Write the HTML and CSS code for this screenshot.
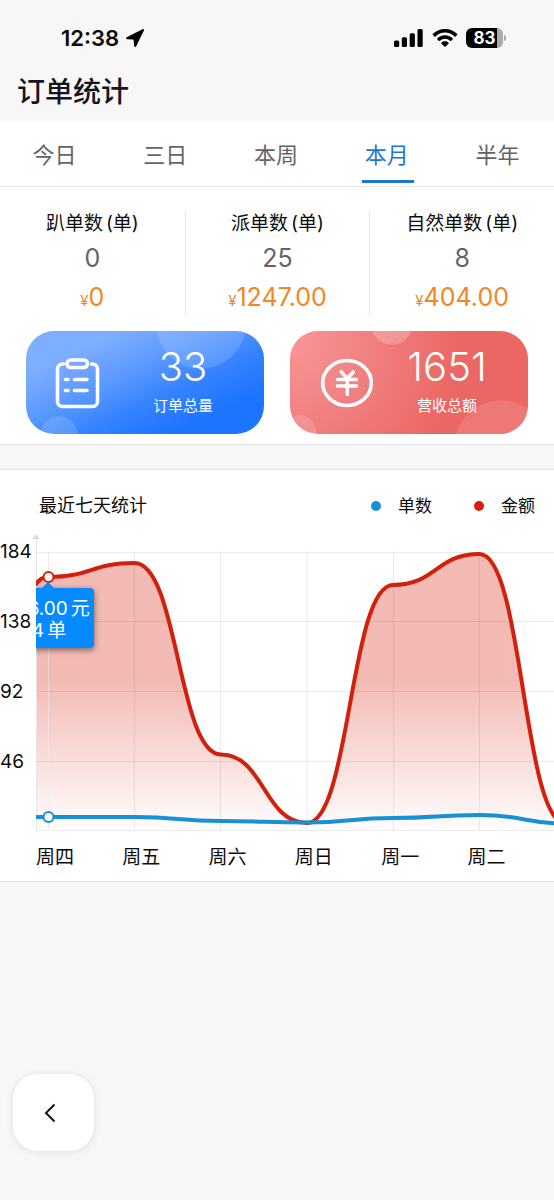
FILE: index.html
```html
<!DOCTYPE html>
<html lang="zh-CN">
<head>
<meta charset="utf-8">
<meta name="viewport" content="width=device-width, initial-scale=1">
<title>订单统计</title>
<link rel="stylesheet" href="styles.css">
</head>
<body>
<div class="status">
  <div class="status-group">
    <span class="clock">12:38</span>
    <svg width="18" height="18" viewBox="0 0 18 18" aria-hidden="true"><path d="M16.500.2.7 8.300c-1.100.6-.8 1.900.5 1.900l5.900.3c.3 0 .5.200.5.500l.6 6.100c.1 1.200 1.500 1.300 2 .2L17.900 1.500c.4-.9-.5-1.700-1.400-1.300z"/></svg>
  </div>
  <div class="status-group status-right">
    <svg width="30" height="18" viewBox="0 0 30 18" aria-hidden="true"><rect x="0" y="11.500" width="5.200" height="6.500" rx="1.500"/><rect x="7.800" y="8.300" width="5.200" height="9.700" rx="1.500"/><rect x="15.700" y="4.200" width="5.200" height="13.800" rx="1.500"/><rect x="23.500" y="0" width="5.200" height="18" rx="1.500"/></svg>
    <svg width="26" height="18" viewBox="0 0 26 18" aria-hidden="true"><path d="M13 0c4.600 0 8.800 1.800 12 4.800.4.400.4.900 0 1.300l-1.300 1.300c-.4.400-.8.400-1.200 0a13.800 13.800 0 0 0-19 0c-.4.400-.8.400-1.200 0L1 6.100c-.4-.4-.4-.9 0-1.300C4.200 1.800 8.400 0 13 0zM13 6.200c2.900 0 5.600 1.100 7.600 3 .4.400.4.900 0 1.300l-1.300 1.300c-.4.400-.8.400-1.200 0a7.500 7.500 0 0 0-10.200 0c-.4.400-.8.400-1.200 0l-1.300-1.300c-.4-.4-.4-.9 0-1.300 2-1.900 4.700-3 7.600-3zM13 12.300c1.300 0 2.500.5 3.400 1.300.4.300.4.800 0 1.200l-2.800 2.700c-.4.400-.8.400-1.200 0l-2.800-2.700c-.4-.4-.4-.9 0-1.200.9-.8 2.100-1.300 3.400-1.300z"/></svg>
    <span class="battery"><span class="battery-body">83</span><span class="battery-tip"></span></span>
  </div>
</div>
<header class="title-bar"><h1>订单统计</h1></header>

<main>
  <nav class="tabs" aria-label="统计周期">
    <button type="button" class="tab">今日</button>
    <button type="button" class="tab">三日</button>
    <button type="button" class="tab">本周</button>
    <button type="button" class="tab tab-active" aria-current="true">本月</button>
    <button type="button" class="tab">半年</button>
  </nav>

  <section class="summary">
    <div class="stats">
      <div class="stat"><h2>趴单数<span class="unit">(单)</span></h2><p class="count">0</p><p class="money"><small>¥</small>0</p></div>
      <div class="stat"><h2>派单数<span class="unit">(单)</span></h2><p class="count">25</p><p class="money"><small>¥</small>1247.00</p></div>
      <div class="stat"><h2>自然单数<span class="unit">(单)</span></h2><p class="count">8</p><p class="money"><small>¥</small>404.00</p></div>
    </div>
    <div class="cards">
      <div class="card card-blue">
        <svg class="card-icon" width="56" height="56" viewBox="0 0 56 56" aria-hidden="true"><path d="M9.500 9H8.500A5 5 0 0 0 3.500 14v32.500a5 5 0 0 0 5 5h30a5 5 0 0 0 5-5V14a5 5 0 0 0-5-5h-1"/><rect x="13" y="5" width="20.500" height="7.500" rx="3.700"/><path d="M11.500 24.500h2.500M20.500 24.500h12.500M11.500 35.500h2.500M20.500 35.500h12.500"/></svg>
        <div class="card-text"><strong>33</strong><span>订单总量</span></div>
      </div>
      <div class="card card-red">
        <svg class="card-icon" width="56" height="56" viewBox="0 0 56 56" aria-hidden="true"><ellipse cx="29" cy="28" rx="24.300" ry="22.500"/><path d="m23.300 17 6 6.500 6-6.500M19.500 24.500h19M19.500 31h19M29.300 24v15.500"/></svg>
        <div class="card-text"><strong>1651</strong><span>营收总额</span></div>
      </div>
    </div>
  </section>

  <section class="panel">
    <div class="panel-head">
      <h2>最近七天统计</h2>
      <ul class="legend">
        <li class="legend-count">单数</li>
        <li class="legend-money">金额</li>
      </ul>
    </div>
    <div class="chart">
      <ol class="y-axis"><li>184</li><li>138</li><li>92</li><li>46</li></ol>
      <div class="plot">
        <svg class="curves" width="604" height="314" viewBox="36 518 604 314" role="img" aria-label="最近七天单数与金额">
          <defs>
            <linearGradient id="fade" gradientUnits="userSpaceOnUse" x1="0" y1="680" x2="0" y2="830">
              <stop offset="0" stop-color="#d8220e" stop-opacity=".31"/>
              <stop offset="1" stop-color="#d8220e" stop-opacity=".01"/>
            </linearGradient>
          </defs>
          <path d="M36 584C40 579 43 577 48 577C91 577 91 563 134.500 563C178 563 178 754.500 221 754.500C264 754.500 264 823 307 823C350 823 350 585 393 585C436 585 436 554 479.500 554C523 554 523 824 566 824V830H36Z" fill="url(#fade)"/>
          <path class="grid" d="M36 552.500H640M36 621.500H640M36 691.500H640M36 761.500H640M36 830.500H640M48.500 551V830M134.500 551V830M220.500 551V830M307 551V830M393.500 551V830M479.500 551V830M566 551V830"/>
          <path class="axis" d="M36.500 536V830"/>
          <path class="cursor" d="M48.500 577V817"/>
          <path class="line line-money" d="M35 585C40 579 43 577 48 577C91 577 91 563 134.500 563C178 563 178 754.500 221 754.500C264 754.500 264 823 307 823C350 823 350 585 393 585C436 585 436 554 479.500 554C523 554 523 824 566 824"/>
          <path class="line line-count" d="M34 817H134.500C178 817 178 821 221 821C264 821 264 822.500 307 822.500C350 822.500 350 818 393 818C436 818 436 815 479.500 815C523 815 523 823.500 566 823.500"/>
          <circle cx="48.500" cy="577" r="5" fill="#fff" stroke="#d3200d" stroke-width="2"/>
          <circle cx="48.500" cy="817" r="5" fill="#fff" stroke="#1890d5" stroke-width="2"/>
        </svg>
        <div class="tooltip"><div>166.00<span class="word">元</span></div><div>4<span class="word">单</span></div></div>
        <ol class="x-axis"><li>周四</li><li>周五</li><li>周六</li><li>周日</li><li>周一</li><li>周二</li><li>周三</li></ol>
      </div>
    </div>
  </section>
</main>

<button type="button" class="back" aria-label="返回"><svg width="12" height="20" viewBox="0 0 12 20" aria-hidden="true"><path d="M10.500 1.500 2 10l8.500 8.500"/></svg></button>
</body>
</html>
```
FILE: styles.css
```css
* { box-sizing: border-box; }
body {
  margin: 0;
  background: #f7f7f7;
  color: #0c0c0c;
  font-family: Inter, "Noto Sans CJK SC", sans-serif;
}
h1, h2, p, ol, ul { margin: 0; padding: 0; font-weight: 400; list-style: none; }
button { font: inherit; border: 0; padding: 0; cursor: pointer; }

.status { display: flex; justify-content: space-between; align-items: center; height: 60px; padding: 16px 48px 0 61px; }
.status-group { display: flex; align-items: center; gap: 7px; }
.status-right { gap: 8px; }
.clock { font-size: 22px; line-height: 28px; font-weight: 600; }
.battery { display: flex; align-items: center; gap: 1px; }
.battery-body {
  width: 37px; height: 20px; border-radius: 6px;
  background: linear-gradient(90deg, #000 83%, #aaa 83%);
  color: #fff; font-size: 17px; line-height: 20px; font-weight: 700; text-align: center;
}
.battery-tip { width: 2px; height: 6px; border-radius: 0 2px 2px 0; background: #aaa; }

.title-bar { height: 62px; padding: 11px 17px; }
.title-bar h1 { font-size: 28px; line-height: 42px; font-weight: 500; color: #14141c; }

.tabs { display: grid; grid-template-columns: repeat(5, 1fr); height: 65px; background: #fff; border-bottom: 1px solid #e4e4e4; }
.tab { display: grid; justify-content: center; background: none; color: #646464; font-size: 22px; line-height: 58px; padding: 4px 2px 0 0; position: relative; }
.tab-active { color: #1b76d2; }
.tab-active::after { content: ""; position: absolute; bottom: 3px; left: 50%; width: 52px; margin-left: -26px; height: 3px; background: #1b76d2; }

.summary { background: #fff; padding: 24px 0 10px; border-bottom: 1px solid #e2e2e2; }
.stats { display: grid; grid-template-columns: repeat(3, 1fr); }
.stat { height: 104px; text-align: center; }
.stat + .stat { border-left: 1px solid #e9e9e9; }
.stat h2 { font-size: 19px; line-height: 26px; }
.unit { margin-left: 3px; }
.count { font-size: 25px; line-height: 42px; color: #646464; }
.money { font-size: 25px; line-height: 36px; color: #f5861f; }
.money small { font-size: 15px; }

.cards { display: grid; grid-template-columns: 1fr 1fr; gap: 26px; padding: 16px 26px 0; }
.card { display: grid; grid-template-columns: 100px 1fr; align-items: center; height: 103px; padding-right: 24px; border-radius: 28px; color: #fff; }
.card-blue {
  background:
    radial-gradient(circle 45px at 175px -7px, #ffffff24 98%, #ffffff00),
    radial-gradient(circle 19px at 33px 104px, #ffffff24 97%, #ffffff00),
    linear-gradient(155deg, #7eafff 20%, #5e9bff 40%, #3683ff 60%, #1c74ff 80%);
}
.card-red {
  background:
    radial-gradient(circle 21px at 102px -7px, #ffffff38 97%, #ffffff00),
    radial-gradient(circle 16px at 10px 100px, #ffffff24 97%, #ffffff00),
    radial-gradient(circle 47px at 211px 116px, #ffffff1c 98%, #ffffff00),
    radial-gradient(circle 170px at 0 10px, #fa9595, #f07f7f 50%, #eb6763);
}
.card-icon { margin-left: 28px; fill: none; stroke: #fff; stroke-width: 3.6; stroke-linecap: round; stroke-linejoin: round; }
.card-text { text-align: center; }
.card-text strong { display: block; font-size: 40px; line-height: 38px; font-weight: 300; padding-bottom: 2px; }
.card-text span { display: block; font-size: 15px; line-height: 24px; margin-top: 6px; }

.panel { margin-top: 24px; background: #fff; border: solid #e4e4e4; border-width: 1px 0; overflow: hidden; }
.panel-head { display: flex; justify-content: space-between; padding: 24px 19px 0 39px; line-height: 24px; }
.panel-head h2 { font-size: 18px; }
.legend { display: flex; gap: 42px; font-size: 17px; }
.legend li { display: flex; align-items: center; gap: 17px; }
.legend li::before { content: ""; width: 10px; height: 10px; border-radius: 50%; background: #1890d5; }
.legend .legend-money::before { background: #d3200d; }

.chart { position: relative; display: grid; grid-template-columns: 36px 1fr; padding-bottom: 10px; }
.chart::before {
  content: ""; position: absolute; z-index: 1; left: 32px; top: 16px;
  border: solid transparent; border-width: 0 4px 5px; border-bottom-color: #dcdcdc;
}
.y-axis { font-size: 19px; line-height: 68px; }
.y-axis li { height: 70px; }
.plot { position: relative; overflow: hidden; }
.curves { display: block; }
.grid { fill: none; stroke: #000; stroke-opacity: .08; }
.axis { fill: none; stroke: #e4e4e4; }
.cursor { fill: none; stroke: #fff; stroke-opacity: .5; }
.line { fill: none; stroke-width: 4; }
.line-money { stroke: #d3200d; }
.line-count { stroke: #1890d5; }
.tooltip {
  position: absolute; left: -34px; top: 70px; width: 92px; height: 60px; padding: 10px 0 0 2px;
  border-radius: 4px; background: #058bff; color: #fff; box-shadow: 0 2px 6px #00000080;
  font-size: 19px; line-height: 22px; text-align: center; white-space: nowrap;
}
.tooltip::before { content: ""; position: absolute; left: 40px; top: -6px; border: solid transparent; border-width: 0 6px 6px; border-bottom-color: #058bff; }
.word { margin-left: 3px; }
.x-axis { display: grid; grid-template-columns: repeat(7, 1fr); width: 604px; padding-top: 13px; font-size: 19px; line-height: 26px; }

.back {
  position: fixed; left: 13px; bottom: 49px; display: grid; place-items: center;
  width: 81px; height: 77px; padding-right: 8px; border-radius: 25px;
  background: #fff; box-shadow: 0 1px 8px #0000001a;
}
.back svg { fill: none; stroke: #14141c; stroke-width: 2; }
```
